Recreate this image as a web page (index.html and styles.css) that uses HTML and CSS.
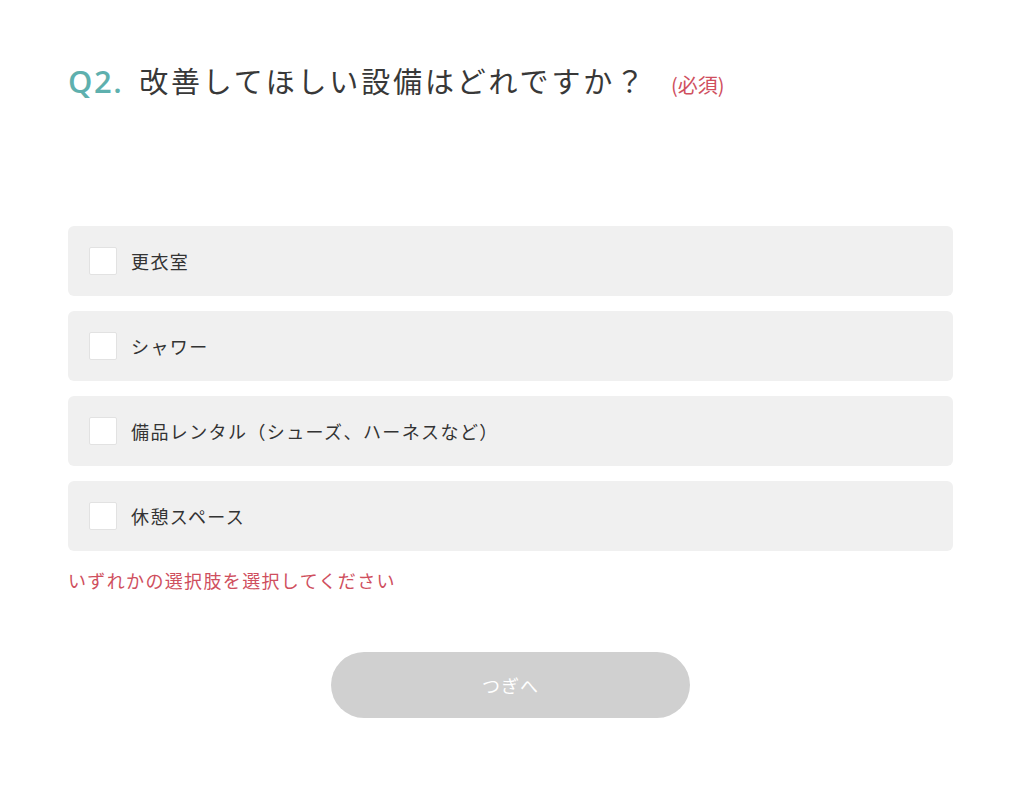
FILE: index.html
```html
<!DOCTYPE html>
<html lang="ja">
<head>
<meta charset="utf-8">
<link rel="stylesheet" href="styles.css">
</head>
<body>
<main class="page">
  <h1 class="question">
    <span class="qnum">Q2.</span>
    <span class="qtext">改善してほしい設備はどれですか？</span>
    <span class="required">(必須)</span>
  </h1>
  <ul class="options">
    <li class="option"><span class="box"></span><span class="label">更衣室</span></li>
    <li class="option"><span class="box"></span><span class="label">シャワー</span></li>
    <li class="option"><span class="box"></span><span class="label">備品レンタル（シューズ、ハーネスなど）</span></li>
    <li class="option"><span class="box"></span><span class="label">休憩スペース</span></li>
  </ul>
  <p class="error">いずれかの選択肢を選択してください</p>
  <div class="actions">
    <button class="next" type="button">つぎへ</button>
  </div>
</main>
</body>
</html>
```

FILE: styles.css
```css
* { box-sizing: border-box; }
html, body { margin: 0; padding: 0; background: #ffffff; }
body {
  font-family: "Noto Sans CJK JP", "Noto Sans", sans-serif;
  color: #333333;
}
.page {
  width: 885px;
  margin-left: 68px;
  padding-top: 58px;
}
.question {
  margin: 0;
  display: flex;
  align-items: baseline;
  font-weight: 400;
  line-height: 44px;
}
.qnum {
  color: #5eb0ae;
  font-family: "Open Sans", "Noto Sans", sans-serif;
  font-size: 31px;
  font-weight: 600;
  letter-spacing: 1.5px;
  margin-right: 16px;
}
.qtext {
  font-size: 29px;
  letter-spacing: 2.85px;
  color: #383838;
}
.required {
  color: #cf4f5e;
  font-size: 20px;
  margin-left: 24px;
}
.options {
  list-style: none;
  margin: 119px 0 0;
  padding: 0;
  display: flex;
  flex-direction: column;
  gap: 15px;
}
.option {
  height: 70px;
  background: #f0f0f0;
  border-radius: 6px;
  display: flex;
  align-items: center;
  padding-left: 21px;
}
.box {
  width: 28px;
  height: 28px;
  background: #ffffff;
  border: 1px solid #e2e2e2;
  border-radius: 2px;
  margin-right: 14px;
  flex: none;
}
.label {
  font-size: 18px;
  letter-spacing: 1.4px;
  color: #333;
}
.error {
  margin: 16px 0 0;
  color: #cf4f5e;
  font-size: 18px;
  letter-spacing: 1.35px;
  line-height: 26px;
}
.actions {
  display: flex;
  justify-content: center;
  margin-top: 59px;
}
.next {
  width: 359px;
  height: 66px;
  border: none;
  border-radius: 33px;
  background: #d0d0d0;
  color: #ffffff;
  font-family: "Noto Sans CJK JP", sans-serif;
  font-size: 18px;
  letter-spacing: 1px;
}
```
